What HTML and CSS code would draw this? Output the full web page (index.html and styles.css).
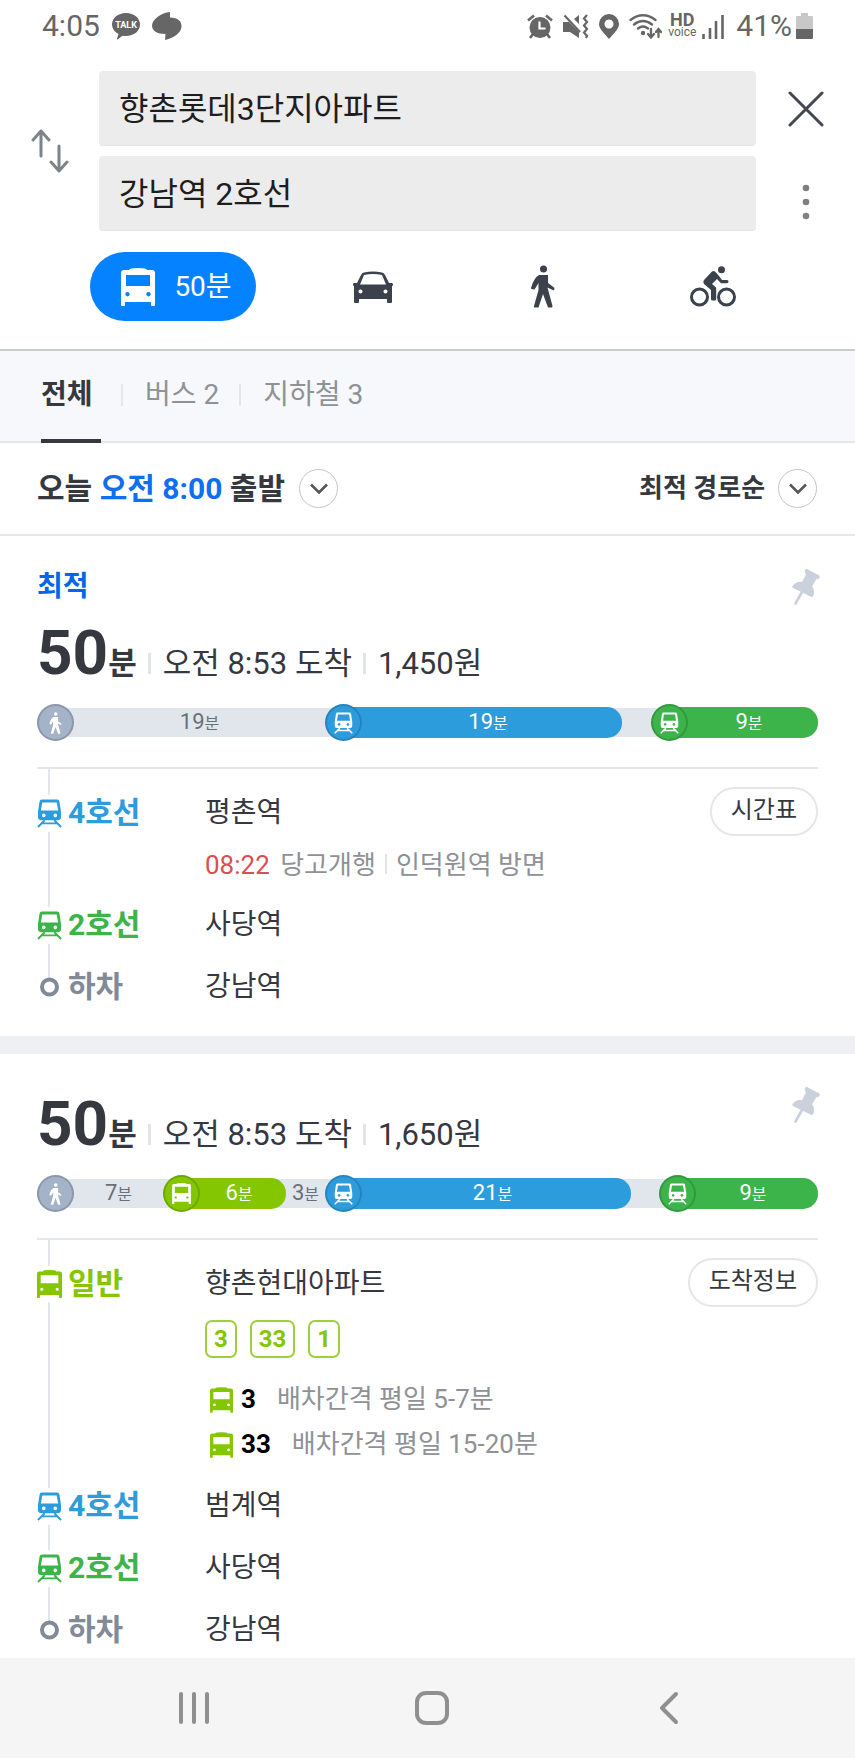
FILE: index.html
```html
<!DOCTYPE html>
<html lang="ko">
<head>
    <meta charset="UTF-8">
    <meta name="viewport" content="width=device-width, initial-scale=1.0">
    <title>길찾기</title>
    <link rel="stylesheet" href="styles.css">
</head>
<body>
    <!-- 공용 아이콘 -->
    <svg class="sprite" aria-hidden="true">
        <symbol id="bus" viewBox="0 0 34 38">
            <path fill-rule="evenodd" d="M8 2q0-2 9-2t9 2h5q3 0 3 3v32q0 1-1 1h-2q-1 0-1-1v-3H4v3q0 1-1 1H1q-1 0-1-1V5q0-3 3-3zM5 7v11h24V7zM6.500 24a2.200 2.200 0 1 0 .01 0zM27.500 24a2.200 2.200 0 1 0 .01 0z"/>
        </symbol>
        <symbol id="train" viewBox="0 0 26 29">
            <path fill-rule="evenodd" d="M5 0h16q2 0 2.300 2L25 13v5q0 3.500-3.500 3.500h-17Q1 21.500 1 18v-5L2.700 2Q3 0 5 0zM5.500 3L4 11.500h18L20.500 3zM7 14.500a1.900 1.900 0 1 0 .01 0zM19 14.500a1.900 1.900 0 1 0 .01 0z"/>
            <path fill="none" stroke="currentColor" stroke-width="2" d="M8 21.500L1 28.500M18 21.500l7 7M5 24.800h16"/>
        </symbol>
        <symbol id="walk" viewBox="0 0 24 43">
            <circle cx="12.500" cy="4" r="3.500"/>
            <path d="M8 10h9v8l6 4.500q1 1-.2 3l-6.300-3L21.500 41q0 1.500-1 1.500H17L12 29 7.500 42.500H3.700Q2.500 42.500 3 41L7.500 25v-7L3.500 24.500.5 24Q-.2 23.500.2 22.500 3 12.500 8 10z"/>
        </symbol>
        <symbol id="car" viewBox="0 0 40 32">
            <path fill-rule="evenodd" d="M11 1.500q9-2 18 0 2 .4 3 2.500L36 12h3q1 0 1 1.500T39 15v16q0 1-1 1h-3q-1 0-1-1v-3H6v3q0 1-1 1H2q-1 0-1-1V15q-1 0-1-1.500T1 12h3l4-8q1-2.100 3-2.500zM11 4L7 13.500h26L29 4q-9-2-18 0zM7.500 18.500a2 2 0 1 0 .01 0zM32.500 18.500a2 2 0 1 0 .01 0z"/>
        </symbol>
        <symbol id="bike" viewBox="0 0 46 41">
            <circle cx="31.500" cy="3.700" r="3.500"/>
            <path d="M21.500 6q2-2 4 0L29 10l3 4h5q1.500 0 1.500 1.600T37 17.200h-6L27 13l-5 5 3.500 3q.7.600.7 2v10q0 1.500-1.500 1.500h-2.200q-1.500 0-1.500-1.500v-9L14 18q-1.500-2 0-4z"/>
            <circle cx="9.500" cy="31" r="8" fill="none" stroke="currentColor" stroke-width="3"/>
            <circle cx="36.500" cy="31" r="8" fill="none" stroke="currentColor" stroke-width="3"/>
        </symbol>
        <symbol id="pin" viewBox="0 0 28 36">
            <path d="M13 1q1-2 3-.5L26.500 6q2 1 1 3-1 1.500-3 1L20 17.500q3 3 1.500 9-.8 2-2.500 1.300L1 19q-1.500-1 0-2.500 4-4.500 9-3.500l4-7.500Q12.300 3 13 1z"/>
            <path fill="none" stroke="currentColor" stroke-width="2.600" stroke-linecap="round" d="M10 23L3.500 34.500"/>
        </symbol>
        <symbol id="chevron" viewBox="0 0 18 11">
            <path fill="none" stroke="currentColor" stroke-width="2.600" d="M1 1.500l8 8 8-8"/>
        </symbol>
        <symbol id="ring" viewBox="0 0 25 20">
            <circle cx="12.500" cy="10" r="7.500" fill="#fff" stroke="currentColor" stroke-width="4"/>
        </symbol>
    </svg>

    <div class="screen">
        <div class="status">
            <span class="clock">4:05</span>
            <svg class="status-talk" width="28" height="27" viewBox="0 0 28 27">
                <path d="M14 0c8 0 14 5 14 11.500S22 23 14 23q-2 0-3.500-.3L5.500 26.500q-.7 0-.5-1L6.500 21Q0 17.500 0 11.500C0 5 6 0 14 0z"/>
                <text x="14" y="15" text-anchor="middle">TALK</text>
            </svg>
            <svg width="30" height="28" viewBox="0 0 30 28"><path d="M18 0v5.500c8 0 12 4 11.500 9.500-1 7-9 11.500-16.500 13l.5-6C5 22 0 18.500 0 13.500.5 7 9 1 18 0z"/></svg>
            <div class="status-right">
                <svg width="26" height="25" viewBox="0 0 26 25">
                    <circle cx="13" cy="13.500" r="10.500"/>
                    <path fill="none" stroke="currentColor" stroke-width="2.600" d="M1 6.500L7 1.500M25 6.500L19 1.500M6 20l-3 4M20 20l3 4"/>
                    <path fill="none" stroke="#fff" stroke-width="2.200" d="M12.500 7.500v7h6"/>
                </svg>
                <svg width="26" height="25" viewBox="0 0 26 25">
                    <path d="M0 8h6l10 10v6L7 18H0zM11 5l5-4v9z"/>
                    <path fill="none" stroke="currentColor" stroke-width="2.200" d="M1.500 1.500L17 18M24 1l-3 3.500 3 3.500-3 3.500 3 3.500-3 3.500 3 3.500-1 2"/>
                </svg>
                <svg width="20" height="25" viewBox="0 0 20 25"><path fill-rule="evenodd" d="M10 0a10 10 0 0 1 10 10c0 5-6 10-10 15C6 20 0 15 0 10A10 10 0 0 1 10 0zM10 5.500a4.500 4.500 0 1 0 .01 0z"/></svg>
                <svg class="status-wifi" width="33" height="25" viewBox="0 0 33 25">
                    <path fill="none" stroke="currentColor" stroke-width="2.300" stroke-linecap="round" d="M1.500 6q12.500-9.500 25 0M5 10.500q9-7 18 0M9 14.500q5-4 10 0M22 15v8M19 20l3 3.500 3-3.500M29.500 23v-8M27 18l2.500-3 2.500 3"/>
                    <circle cx="14" cy="19" r="2.200"/>
                </svg>
                <span class="hd"><b>HD</b><small>voice</small></span>
                <svg width="22" height="25" viewBox="0 0 22 25"><path fill="none" stroke="currentColor" stroke-width="2.600" d="M1.500 25v-5M8 25V14M14 25V7M20.500 25V1"/></svg>
                <span class="battery-text">41%</span>
                <svg width="17" height="26" viewBox="0 0 17 26"><path fill="#c8c8c8" d="M5 0h7v3h4q1 0 1 1v13H0V4q0-1 1-1h4z"/><path d="M0 16h17v9q0 1-1 1H1q-1 0-1-1z"/></svg>
            </div>
        </div>

        <header class="search">
            <button class="swap" aria-label="출발지 도착지 바꾸기">
                <svg width="38" height="46" viewBox="0 0 38 46"><path d="M10 28V3M2 12l8-9 8 9M28 18v25M20 34l8 9 8-9"/></svg>
            </button>
            <div class="fields">
                <input type="text" value="향촌롯데3단지아파트" aria-label="출발지">
                <input type="text" value="강남역 2호선" aria-label="도착지">
            </div>
            <div class="actions">
                <button aria-label="닫기">
                    <svg width="36" height="36" viewBox="0 0 36 36"><path class="close-line" d="M2 2l32 32M34 2L2 34"/></svg>
                </button>
                <button class="more" aria-label="더보기">
                    <svg width="8" height="36" viewBox="0 0 8 36"><circle cx="4" cy="4" r="3.300"/><circle cx="4" cy="18" r="3.300"/><circle cx="4" cy="32" r="3.300"/></svg>
                </button>
            </div>
        </header>

        <nav class="modes">
            <button class="mode-active"><svg width="34" height="38"><use href="#bus"/></svg>50분</button>
            <button aria-label="자동차"><svg width="40" height="32"><use href="#car"/></svg></button>
            <button aria-label="도보"><svg width="24" height="43"><use href="#walk"/></svg></button>
            <button aria-label="자전거"><svg width="46" height="41"><use href="#bike"/></svg></button>
        </nav>

        <nav class="tabs">
            <a href="#" class="active">전체</a>
            <a href="#">버스 2</a>
            <a href="#">지하철 3</a>
        </nav>

        <div class="filters">
            <button class="depart">
                <span>오늘 <em>오전 8:00</em> 출발</span>
                <span class="circle"><svg width="18" height="11"><use href="#chevron"/></svg></span>
            </button>
            <label class="sort">
                <select aria-label="정렬">
                    <option>최적 경로순</option>
                </select>
                <span class="circle"><svg width="18" height="11"><use href="#chevron"/></svg></span>
            </label>
        </div>

        <main class="routes">
            <section class="route">
                <div class="route-head">
                    <div>
                        <p class="best">최적</p>
                        <div class="summary">
                            <strong>50<small>분</small></strong>
                            <span>오전 8:53 도착</span>
                            <span>1,450원</span>
                        </div>
                    </div>
                    <button class="pin" aria-label="고정"><svg width="28" height="36"><use href="#pin"/></svg></button>
                </div>
                <div class="bar">
                    <div class="seg walk" style="flex-grow: 288">
                        <i><svg width="13" height="22"><use href="#walk"/></svg></i>
                        <span>19<small>분</small></span>
                    </div>
                    <div class="seg ride line4" style="flex-grow: 297">
                        <i><svg width="19" height="22"><use href="#train"/></svg></i>
                        <span>19<small>분</small></span>
                    </div>
                    <div class="seg" style="flex-grow: 29"></div>
                    <div class="seg ride line2" style="flex-grow: 167">
                        <i><svg width="19" height="22"><use href="#train"/></svg></i>
                        <span>9<small>분</small></span>
                    </div>
                </div>
                <ol class="steps">
                    <li>
                        <div class="step">
                            <span class="line line4"><svg width="25" height="29"><use href="#train"/></svg>4호선</span>
                            <span class="stop">평촌역</span>
                            <button class="info">시간표</button>
                        </div>
                        <div class="detail">
                            <p class="train-time"><time>08:22</time> <span>당고개행</span><span>인덕원역 방면</span></p>
                        </div>
                    </li>
                    <li>
                        <div class="step">
                            <span class="line line2"><svg width="25" height="29"><use href="#train"/></svg>2호선</span>
                            <span class="stop">사당역</span>
                        </div>
                    </li>
                    <li>
                        <div class="step">
                            <span class="line off"><svg width="25" height="20"><use href="#ring"/></svg>하차</span>
                            <span class="stop">강남역</span>
                        </div>
                    </li>
                </ol>
            </section>

            <section class="route">
                <div class="route-head">
                    <div class="summary">
                        <strong>50<small>분</small></strong>
                        <span>오전 8:53 도착</span>
                        <span>1,650원</span>
                    </div>
                    <button class="pin" aria-label="고정"><svg width="28" height="36"><use href="#pin"/></svg></button>
                </div>
                <div class="bar">
                    <div class="seg walk" style="flex-grow: 126">
                        <i><svg width="13" height="22"><use href="#walk"/></svg></i>
                        <span>7<small>분</small></span>
                    </div>
                    <div class="seg ride bus" style="flex-grow: 123">
                        <i><svg width="19" height="21"><use href="#bus"/></svg></i>
                        <span>6<small>분</small></span>
                    </div>
                    <div class="seg walk" style="flex-grow: 39">
                        <span>3<small>분</small></span>
                    </div>
                    <div class="seg ride line4" style="flex-grow: 306">
                        <i><svg width="19" height="22"><use href="#train"/></svg></i>
                        <span>21<small>분</small></span>
                    </div>
                    <div class="seg" style="flex-grow: 28"></div>
                    <div class="seg ride line2" style="flex-grow: 159">
                        <i><svg width="19" height="22"><use href="#train"/></svg></i>
                        <span>9<small>분</small></span>
                    </div>
                </div>
                <ol class="steps">
                    <li>
                        <div class="step">
                            <span class="line bus"><svg width="25" height="28"><use href="#bus"/></svg>일반</span>
                            <span class="stop">향촌현대아파트</span>
                            <button class="info">도착정보</button>
                        </div>
                        <div class="detail">
                            <div class="badges"><b>3</b><b>33</b><b>1</b></div>
                            <p class="interval"><svg width="23" height="26"><use href="#bus"/></svg><b>3</b>배차간격 평일 5-7분</p>
                            <p class="interval"><svg width="23" height="26"><use href="#bus"/></svg><b>33</b>배차간격 평일 15-20분</p>
                        </div>
                    </li>
                    <li>
                        <div class="step">
                            <span class="line line4"><svg width="25" height="29"><use href="#train"/></svg>4호선</span>
                            <span class="stop">범계역</span>
                        </div>
                    </li>
                    <li>
                        <div class="step">
                            <span class="line line2"><svg width="25" height="29"><use href="#train"/></svg>2호선</span>
                            <span class="stop">사당역</span>
                        </div>
                    </li>
                    <li>
                        <div class="step">
                            <span class="line off"><svg width="25" height="20"><use href="#ring"/></svg>하차</span>
                            <span class="stop">강남역</span>
                        </div>
                    </li>
                </ol>
            </section>
        </main>

        <footer class="softkeys">
            <button aria-label="최근 앱"><svg width="32" height="34" viewBox="0 0 32 34"><path d="M3 3v28M16 3v28M29 3v28"/></svg></button>
            <button aria-label="홈"><svg width="34" height="34" viewBox="0 0 34 34"><rect x="2" y="2" width="30" height="30" rx="9"/></svg></button>
            <button aria-label="뒤로"><svg width="20" height="34" viewBox="0 0 20 34"><path d="M17 3L3 17l14 14"/></svg></button>
        </footer>
    </div>
</body>
</html>
```

FILE: styles.css
```css
* {
    box-sizing: border-box;
}
body {
    margin: 0;
    font-family: Roboto, "Noto Sans CJK KR", sans-serif;
    line-height: 1.4;
    color: #36383f;
    background-color: #fff;
}
button,
input,
select {
    font: inherit;
    color: inherit;
    border: 0;
    margin: 0;
    padding: 0;
    background: none;
}
p,
ol {
    margin: 0;
    padding: 0;
    list-style: none;
}
svg {
    display: block;
    flex: none;
    fill: currentColor;
}
.sprite {
    position: absolute;
    width: 0;
    height: 0;
}
.screen {
    display: flex;
    flex-direction: column;
    height: 100vh;
}

/* 상태 표시줄 */
.status {
    flex: none;
    display: flex;
    align-items: center;
    gap: 12px;
    height: 52px;
    padding: 0 42px;
    font-size: 30px;
    color: #666;
}
.status-talk text {
    font-size: 9px;
    font-weight: bold;
    fill: #fff;
}
.status-right {
    display: flex;
    align-items: center;
    gap: 10px;
    margin-left: auto;
}
.status-wifi {
    margin-right: -4px;
}
.hd {
    display: flex;
    flex-direction: column;
    align-items: center;
    margin-right: -4px;
    line-height: 12px;
}
.hd b {
    font-size: 18px;
}
.hd small {
    font-size: 12px;
}
.battery-text {
    margin: 0 -6px 0 2px;
}

/* 출발지 / 도착지 */
.search {
    flex: none;
    display: grid;
    grid-template-columns: 99px 1fr 99px;
    padding-top: 19px;
}
.search button {
    display: flex;
    align-items: center;
    justify-content: center;
    width: 100%;
    height: 75px;
}
.search .swap {
    height: 160px;
    color: #7d8489;
}
.swap path {
    fill: none;
    stroke: currentColor;
    stroke-width: 3;
    stroke-linecap: round;
    stroke-linejoin: round;
}
.fields {
    display: flex;
    flex-direction: column;
    gap: 10px;
}
.fields input {
    width: 100%;
    height: 75px;
    padding: 0 20px 4px;
    font-size: 32px;
    color: #1e1e1e;
    background-color: #ececec;
    border-bottom: 1px solid #e4e4e4;
    border-radius: 4px;
}
.close-line {
    fill: none;
    stroke: #43474f;
    stroke-width: 3;
    stroke-linecap: round;
}
.search .more {
    margin-top: 18px;
    color: #7f7f7f;
}

/* 이동 수단 */
.modes {
    flex: none;
    display: flex;
    align-items: center;
    padding: 13px 57px 28px 90px;
    color: #3b424c;
    border-bottom: 2px solid #cbcccd;
}
.modes button {
    flex: 1;
    display: flex;
    align-items: center;
    justify-content: center;
    height: 69px;
}
.modes .mode-active {
    flex: none;
    gap: 19px;
    width: 166px;
    margin-right: 32px;
    padding-left: 7px;
    font-size: 28px;
    color: #fff;
    background-color: #0482ff;
    border-radius: 35px;
}

.tabs {
    flex: none;
    display: flex;
    height: 92px;
    padding: 0 41px;
    font-size: 28px;
    background-color: #f7f8fb;
    border-bottom: 2px solid #e4e6ec;
}
.tabs a {
    display: flex;
    align-items: center;
    margin-bottom: -2px;
    padding-bottom: 4px;
    color: #8f9196;
    text-decoration: none;
}
.tabs a + a::before {
    content: "";
    width: 2px;
    height: 22px;
    margin: 0 22px 0 20px;
    background-color: #e4e6ea;
}
.tabs .active {
    width: 60px;
    padding-bottom: 0;
    font-weight: bold;
    color: #36383f;
    border-bottom: 4px solid #36383f;
}

.filters {
    flex: none;
    display: flex;
    align-items: center;
    justify-content: space-between;
    height: 93px;
    padding: 0 38px 0 37px;
    border-bottom: 2px solid #e6e7eb;
}
.depart,
.sort {
    display: flex;
    align-items: center;
    gap: 12px;
    font-weight: bold;
}
.depart {
    gap: 14px;
    font-size: 30px;
}
.depart em {
    font-style: normal;
    color: #0f6fee;
}
.sort select {
    appearance: none;
    font-size: 26px;
}
.circle {
    display: flex;
    align-items: center;
    justify-content: center;
    width: 39px;
    height: 39px;
    color: #55575c;
    border: 1px solid #c4c5c8;
    border-radius: 50%;
}

/* 경로 목록 */
.routes {
    flex: 1;
    min-height: 0;
    overflow: hidden;
}
.route {
    padding: 33px 37px 18px;
}
.route + .route {
    border-top: 18px solid #eff0f3;
}
.route-head {
    display: flex;
    align-items: flex-start;
    justify-content: space-between;
    margin-bottom: 7px;
}
.best {
    font-size: 28px;
    line-height: 36px;
    margin-bottom: 11px;
    font-weight: bold;
    color: #0068e8;
}
.summary {
    display: flex;
    align-items: baseline;
    font-size: 31px;
    line-height: 74px;
}
.summary strong {
    font-size: 62px;
}
.summary small {
    font-size: 31px;
}
.summary span::before {
    content: "";
    display: inline-block;
    width: 3px;
    height: 21px;
    margin: 0 12px 0 11px;
    background-color: #e3e4e6;
}
.pin {
    margin-right: -2px;
    color: #cad1dc;
}

.bar {
    display: flex;
    height: 29px;
    margin-bottom: 30px;
    font-size: 22px;
    color: #6b6f76;
    background-color: #e1e6ed;
    border-radius: 15px;
}
.seg {
    flex: 0 1 0;
    display: flex;
    align-items: center;
    min-width: 0;
}
.seg i {
    position: relative;
    flex: none;
    display: flex;
    align-items: center;
    justify-content: center;
    width: 37px;
    height: 37px;
    color: #fff;
    background-color: #a5b3c8;
    border: 2px solid rgba(0, 0, 0, 0.15);
    border-radius: 50%;
}
.seg span {
    flex: 1;
    line-height: 29px;
    text-align: center;
    white-space: nowrap;
}
.seg small {
    font-size: 16px;
}
.ride span {
    margin-left: -18px;
    padding: 0 8px 0 18px;
    color: #fff;
    border-radius: 0 15px 15px 0;
}
.ride.line4 > * {
    background-color: #2d9cdc;
}
.ride.line2 > * {
    background-color: #3cb44a;
}
.ride.bus > * {
    background-color: #84c600;
}

.steps {
    padding-top: 13px;
    border-top: 2px solid #e3e6ec;
}
.steps li {
    position: relative;
}
.steps li::before {
    content: "";
    position: absolute;
    top: 0;
    bottom: 0;
    left: 11px;
    width: 2px;
    background-color: #e3e6ec;
}
.steps li:first-child::before {
    top: -13px;
}
.steps li:last-child::before {
    bottom: 31px;
}
.step {
    position: relative;
    display: grid;
    grid-template-columns: 168px 1fr auto;
    align-items: center;
    height: 62px;
}
.line {
    display: flex;
    align-items: center;
    gap: 6px;
    font-size: 30px;
    font-weight: bold;
}
.line svg {
    box-sizing: content-box;
    padding: 4px 0;
    background-color: #fff;
}
.line.line4 {
    color: #2d9cdc;
}
.line.line2 {
    color: #3cb44a;
}
.line.bus {
    color: #84c600;
}
.line.off {
    color: #828a97;
}
.line.off svg {
    padding: 0;
    background: none;
}
.stop {
    font-size: 28px;
}
.info {
    height: 49px;
    margin-bottom: 4px;
    padding: 0 19px;
    font-size: 24px;
    background-color: #fff;
    border: 2px solid #e4e6ec;
    border-radius: 25px;
}
.detail {
    padding: 0 0 8px 168px;
    font-size: 26px;
    color: #8f9196;
}
.train-time {
    line-height: 42px;
}
.train-time time {
    margin-right: 4px;
    color: #d94f52;
}
.train-time span + span::before {
    content: "";
    display: inline-block;
    width: 2px;
    height: 20px;
    margin: 0 9px;
    background-color: #e3e4e6;
}
.badges {
    display: flex;
    gap: 13px;
    padding: 5px 0 19px;
}
.badges b {
    padding: 0 7px;
    font-size: 24px;
    line-height: 34px;
    color: #84c600;
    border: 2px solid #9fd03c;
    border-radius: 7px;
}
.interval {
    display: flex;
    align-items: center;
    height: 45px;
    padding-left: 5px;
}
.interval svg {
    color: #84c600;
}
.interval b {
    margin: 0 21px 0 8px;
    color: #000;
}

/* 하단 내비게이션 */
.softkeys {
    flex: none;
    display: flex;
    justify-content: center;
    height: 100px;
    padding-left: 8px;
    color: #8f8f8f;
    background-color: #f5f5f5;
}
.softkeys button {
    display: flex;
    align-items: center;
    justify-content: center;
    width: 28%;
}
.softkeys svg {
    fill: none;
    stroke: currentColor;
    stroke-width: 4;
    stroke-linecap: round;
    stroke-linejoin: round;
}
```
